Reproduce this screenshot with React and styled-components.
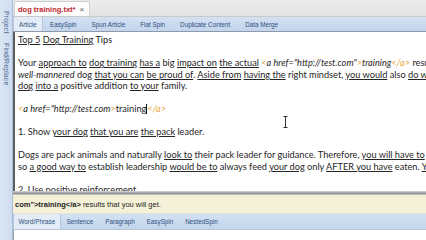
import React from 'react';
import styled, { createGlobalStyle } from 'styled-components';

const GlobalStyle = createGlobalStyle`
  html, body {
    margin: 0;
    padding: 0;
    background: #ffffff;
  }
  #root {
    width: 426px;
    height: 240px;
    overflow: hidden;
  }
`;

const Window = styled.div`
  display: flex;
  width: 426px;
  height: 240px;
  overflow: hidden;
  background: #fff;
`;

const Sidebar = styled.div`
  width: 12px;
  flex-shrink: 0;
  background: linear-gradient(90deg, #dbe6f4 0%, #cfdcef 100%);
  border-right: 1px solid #a8bcd8;
  display: flex;
  flex-direction: column;
  align-items: center;
  padding-top: 11px;
  gap: 9px;
`;

const SideLabel = styled.span`
  writing-mode: vertical-rl;
  font-family: "Liberation Sans", Arial, sans-serif;
  font-size: 7px;
  color: #4a6892;
  letter-spacing: 0.1px;
`;

const Main = styled.div`
  flex: 1;
  min-width: 0;
  display: flex;
  flex-direction: column;
`;

const DocStrip = styled.div`
  height: 16px;
  flex-shrink: 0;
  display: flex;
  align-items: flex-end;
  padding-left: 1px;
  background: linear-gradient(180deg, #ececec 0%, #e2e2e2 100%);
  border-bottom: 1px solid #c9c9c9;
`;

const DocTab = styled.div`
  height: 14px;
  display: flex;
  align-items: center;
  gap: 4px;
  padding: 0 5px 0 3px;
  background: #fdfdfd;
  border: 1px solid #cfcfcf;
  border-bottom: none;
  font-family: "Liberation Sans", Arial, sans-serif;
  font-size: 7.5px;
  font-weight: bold;
  color: #c0262c;
`;

const CloseMark = styled.span`
  color: #555;
  font-weight: normal;
  font-size: 8px;
`;

const TabBar = styled.div`
  height: ${({ $h }) => $h || 14}px;
  flex-shrink: 0;
  display: flex;
  align-items: stretch;
  background: linear-gradient(180deg, #d3e1f2 0%, #c3d5ec 100%);
  border-bottom: 1px solid ${({ $line }) => $line || '#8e9aaa'};
`;

const Tab = styled.div`
  display: flex;
  align-items: center;
  padding: 0 ${({ $pad }) => $pad || 6.5}px;
  font-family: "Liberation Sans", Arial, sans-serif;
  font-size: 6.3px;
  color: #2d4f80;
  background: ${({ $active }) => ($active ? '#e3ecf7' : 'transparent')};
  border-left: 1px solid ${({ $active }) => ($active ? '#b7c8de' : 'transparent')};
  border-right: 1px solid ${({ $active }) => ($active ? '#b7c8de' : 'transparent')};
`;

const Editor = styled.div`
  position: relative;
  flex: 1;
  min-height: 0;
  overflow: hidden;
  border-left: 2px solid #5d5d5d;
  padding: 2px 0 0 3px;
  font-family: Lato, "Open Sans", sans-serif;
  font-size: 9.2px;
  line-height: 11.5px;
  color: #262626;
`;

const Line = styled.div`
  white-space: nowrap;
  height: 11.5px;
`;

const Blank = styled.div`
  height: 11.5px;
`;

const U = styled.span`
  text-decoration: underline;
  text-underline-offset: 1px;
`;

const I = styled.span`
  font-style: italic;
`;

const Tag = styled.span`
  color: #eaa53c;
  font-style: italic;
`;

const Caret = styled.span`
  display: inline-block;
  width: 1px;
  height: 10px;
  background: #111;
  vertical-align: -2px;
`;

const Pointer = styled.svg`
  position: absolute;
  left: 268px;
  top: 84px;
`;

const Divider = styled.div`
  height: 4px;
  flex-shrink: 0;
  background: linear-gradient(180deg, #dcdcdc 0%, #a3a3a3 45%, #8f8f8f 60%, #d3d3d3 100%);
`;

const SelectionBar = styled.div`
  height: 18px;
  flex-shrink: 0;
  display: flex;
  align-items: center;
  padding-left: 2px;
  background: #f5f1d8;
  border-bottom: 1px solid #e4e2d4;
  font-family: "Liberation Sans", Arial, sans-serif;
  font-size: 7.5px;
  color: #222;
  white-space: nowrap;
`;

const Strong = styled.b`
  font-weight: bold;
  margin-right: 2px;
`;

const BottomPane = styled.div`
  height: 10px;
  flex-shrink: 0;
  border-left: 1px solid #9aa3ae;
  background: #fff;
`;

const AnchorTag = ({ closing }) => (
  <>
    <Tag>&lt;</Tag>
    <I>a href="http://test.com{closing ? '"' : ''}</I>
    <Tag>&gt;</Tag>
  </>
);

export default function App() {
  return (
    <>
      <GlobalStyle />
      <Window>
        <Sidebar>
          <SideLabel>Project</SideLabel>
          <SideLabel>Find/Replace</SideLabel>
        </Sidebar>
        <Main>
          <DocStrip>
            <DocTab>
              dog training.txt* <CloseMark>×</CloseMark>
            </DocTab>
          </DocStrip>
          <TabBar>
            <Tab $active $pad={5}>Article</Tab>
            <Tab>EasySpin</Tab>
            <Tab>Spun Article</Tab>
            <Tab>Flat Spin</Tab>
            <Tab>Duplicate Content</Tab>
            <Tab>Data Merge</Tab>
          </TabBar>
          <Editor>
            <Line>
              <U>Top 5</U> <U>Dog Training</U> Tips
            </Line>
            <Blank />
            <Line>
              Your <U>approach to</U> <U>dog training</U> <U>has a</U> big <U>impact on</U>{' '}
              <U>the actual</U> <AnchorTag closing />
              <I>training</I>
              <Tag>&lt;/a&gt;</Tag> results that you will get from your dog training efforts.
            </Line>
            <Line>
              <I>well-mannered</I> dog <U>that you can</U> <U>be proud of</U>. <U>Aside from</U>{' '}
              <U>having the</U> right mindset, <U>you would</U> also <U>do well</U> to turn your
            </Line>
            <Line>
              <U>dog</U> <U>into a</U> positive addition <U>to your</U> family.
            </Line>
            <Blank />
            <Line>
              <AnchorTag />
              training
              <Caret />
              <Tag>&lt;/a&gt;</Tag>
            </Line>
            <Blank />
            <Line>
              1. Show <U>your dog</U> <U>that you are</U> <U>the pack</U> leader.
            </Line>
            <Blank />
            <Line>
              Dogs are pack animals and naturally <U>look to</U> their pack leader for guidance.
              Therefore, <U>you will have to</U> establish yourself as the leader,
            </Line>
            <Line>
              so <U>a good way to</U> establish leadership <U>would be to</U> always feed{' '}
              <U>your dog</U> only <U>AFTER you have</U> eaten. <U>You</U> should also
            </Line>
            <Blank />
            <Line>2. Use positive reinforcement</Line>
            <Pointer width="5" height="12" viewBox="0 0 5 12">
              <path d="M0.5 0.5h4M2.5 0.5v11M0.5 11.5h4" stroke="#333" strokeWidth="1" fill="none" />
            </Pointer>
          </Editor>
          <Divider />
          <SelectionBar>
            <Strong>com"&gt;training&lt;/a&gt;</Strong> results that you will get.
          </SelectionBar>
          <TabBar $h={15} $line="#b9c6d6">
            <Tab $active $pad={4.5}>Word/Phrase</Tab>
            <Tab $pad={5}>Sentence</Tab>
            <Tab $pad={5}>Paragraph</Tab>
            <Tab $pad={5}>EasySpin</Tab>
            <Tab $pad={5}>NestedSpin</Tab>
          </TabBar>
          <BottomPane />
        </Main>
      </Window>
    </>
  );
}
